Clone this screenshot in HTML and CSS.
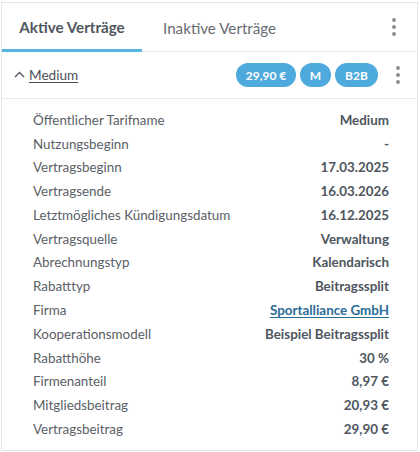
FILE: index.html
```html
<!DOCTYPE html>
<html lang="de">
<head>
<meta charset="utf-8">
<link rel="stylesheet" href="styles.css">
</head>
<body>
<div class="card">
  <div class="tabs">
    <div class="tab active">Aktive Verträge</div>
    <div class="tab">Inaktive Verträge</div>
    <div class="spacer"></div>
    <div class="kebab tab-kebab"><span></span><span></span><span></span></div>
  </div>
  <div class="head">
    <svg class="chev" width="11" height="7" viewBox="0 0 11 7"><path d="M1 6 L5.5 1.5 L10 6" fill="none" stroke="#555b62" stroke-width="1.4"/></svg>
    <span class="title">Medium</span>
    <div class="spacer"></div>
    <span class="pill p1">29,90 €</span>
    <span class="pill p2">M</span>
    <span class="pill p3">B2B</span>
    <div class="kebab head-kebab"><span></span><span></span><span></span></div>
  </div>
  <div class="details">
    <div class="row"><span class="lbl">Öffentlicher Tarifname</span><span class="val">Medium</span></div>
    <div class="row"><span class="lbl">Nutzungsbeginn</span><span class="val">-</span></div>
    <div class="row"><span class="lbl">Vertragsbeginn</span><span class="val">17.03.2025</span></div>
    <div class="row"><span class="lbl">Vertragsende</span><span class="val">16.03.2026</span></div>
    <div class="row"><span class="lbl">Letztmögliches Kündigungsdatum</span><span class="val">16.12.2025</span></div>
    <div class="row"><span class="lbl">Vertragsquelle</span><span class="val">Verwaltung</span></div>
    <div class="row"><span class="lbl">Abrechnungstyp</span><span class="val">Kalendarisch</span></div>
    <div class="row"><span class="lbl">Rabatttyp</span><span class="val">Beitragssplit</span></div>
    <div class="row"><span class="lbl">Firma</span><a class="val link" href="#">Sportalliance GmbH</a></div>
    <div class="row"><span class="lbl">Kooperationsmodell</span><span class="val">Beispiel Beitragssplit</span></div>
    <div class="row"><span class="lbl">Rabatthöhe</span><span class="val">30 %</span></div>
    <div class="row"><span class="lbl">Firmenanteil</span><span class="val">8,97 €</span></div>
    <div class="row"><span class="lbl">Mitgliedsbeitrag</span><span class="val">20,93 €</span></div>
    <div class="row"><span class="lbl">Vertragsbeitrag</span><span class="val">29,90 €</span></div>
  </div>
</div>
</body>
</html>
```
FILE: styles.css
```css
html, body { margin: 0; padding: 0; background: #fff; }
body {
  padding: 2px 2px 0 1px;
  font-family: "Lato", "Open Sans", sans-serif;
  color: #555b62;
}
.card {
  border: 1px solid #e3e6e8;
  height: 449px;
  box-sizing: border-box;
}
.tabs {
  display: flex;
  align-items: stretch;
  height: 48px;
  border-bottom: 1px solid #e8eaec;
  box-sizing: content-box;
}
.tab {
  display: flex;
  align-items: center;
  font-size: 15.2px;
  color: #666c72;
  padding: 0 18px;
}
.tab.active {
  width: 140px;
  box-sizing: border-box;
  justify-content: center;
  padding: 0;
  font-weight: 700;
  color: #4f565d;
  border-bottom: 3px solid #5ab4e2;
  margin-bottom: -1px;
  padding-top: 1px;
}
.tab + .tab { padding-left: 21px; padding-top: 1px; }
.spacer { flex: 1; }
.kebab {
  display: flex;
  flex-direction: column;
  justify-content: center;
  gap: 3px;
  width: 4px;
  flex: none;
}
.kebab span {
  width: 4px; height: 4px; border-radius: 50%; background: #8b8f93; display: block;
}
.tab-kebab { margin-right: 21px; }
.head {
  display: flex;
  align-items: center;
  height: 46px;
  border-bottom: 1px solid #e8eaec;
  padding-left: 12px;
}
.chev { margin-right: 4px; margin-top: -2px; flex: none; }
.title {
  font-size: 13.6px;
  text-decoration: underline;
  text-underline-offset: 2px;
  color: #4a5057;
}
.pill {
  background: #4ea9dc;
  color: #fff;
  font-size: 12px;
  font-weight: 700;
  height: 24px;
  border-radius: 12px;
  display: flex;
  align-items: center;
  justify-content: center;
  margin-right: 4px;
  flex: none;
}
.p1 { width: 60px; }
.p2 { width: 31px; }
.p3 { width: 43px; }
.head-kebab { margin-left: 14px; margin-right: 17px; }
.details {
  padding: 9px 28px 0 31px;
}
.row {
  display: flex;
  justify-content: space-between;
  align-items: center;
  height: 23.77px;
  font-size: 13.4px;
}
.lbl { color: #5a6066; }
.val { font-weight: 700; color: #4e565e; }
.link { color: #2b6c96; text-decoration: underline; text-underline-offset: 2px; }
```
